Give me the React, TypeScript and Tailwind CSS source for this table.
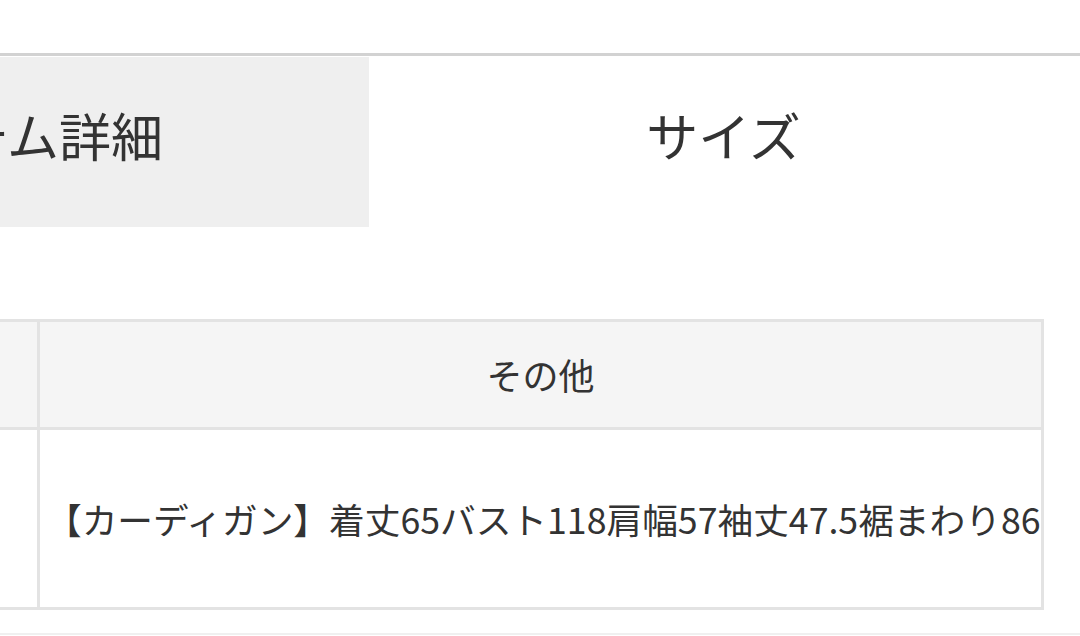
import React from "react";

const font = { fontFamily: '"Noto Sans CJK JP", "Noto Sans", sans-serif' };

const App = () => {
  return (
    <div
      className="w-[1080px] h-[636px] overflow-hidden bg-white text-[#333333]"
      style={font}
    >
      <div className="h-[53px]" />
      <div className="border-t-[3px] border-[#d2d2d2]" />
      {/* tabs */}
      <div className="flex ml-[-340px] mt-[1px]">
        <div className="w-[709px] h-[170px] bg-[#efefef] flex items-center justify-center pb-[14px] pr-[10px] text-[52px] leading-none">
          アイテム詳細
        </div>
        <div className="w-[709px] h-[170px] flex items-center justify-center pb-[14px] text-[52px] leading-none">
          サイズ
        </div>
      </div>

      {/* size table */}
      <div className="mt-[92px] ml-[-200px] w-[1244px] border-[3px] border-[#e3e3e3]">
        <div className="flex h-[108px] bg-[#f5f5f5] border-b-[3px] border-[#e3e3e3]">
          <div className="w-[237px] border-r-[3px] border-[#e3e3e3]" />
          <div className="flex-1 flex items-center justify-center pb-[2px] text-[36px]">
            その他
          </div>
        </div>
        <div className="flex h-[177px]">
          <div className="w-[237px] border-r-[3px] border-[#e3e3e3]" />
          <div className="flex-1 flex items-center pl-[6px] text-[35.7px] whitespace-nowrap">
            【カーディガン】着丈65バスト118肩幅57袖丈47.5裾まわり86
          </div>
        </div>
      </div>
      <div className="mt-[23px] border-t-[2px] border-[#f0f0f0]" />
    </div>
  );
};

export default App;
